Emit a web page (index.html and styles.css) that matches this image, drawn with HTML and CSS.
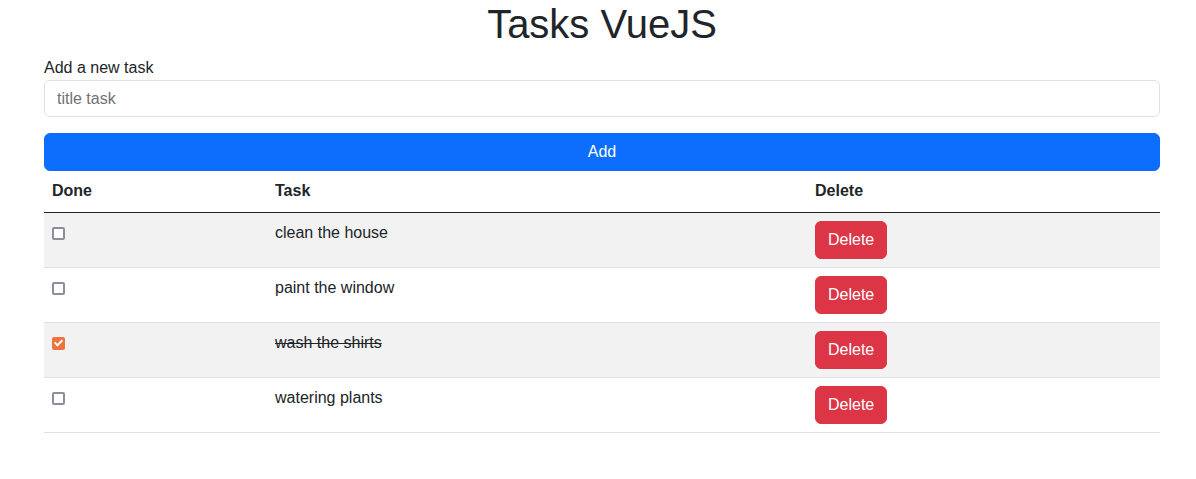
FILE: index.html
```html
<!DOCTYPE html>
<html lang="en">
<head>
<meta charset="utf-8">
<title>Tasks VueJS</title>
<link rel="stylesheet" href="styles.css">
</head>
<body>
<div class="container">
  <h1 class="title">Tasks VueJS</h1>
  <label class="label" for="task">Add a new task</label>
  <input id="task" class="input" type="text" placeholder="title task">
  <button class="btn btn-add">Add</button>
  <table class="table">
    <thead>
      <tr><th class="col-done">Done</th><th class="col-task">Task</th><th>Delete</th></tr>
    </thead>
    <tbody>
      <tr class="odd"><td><input class="check" type="checkbox"></td><td>clean the house</td><td><button class="btn btn-del">Delete</button></td></tr>
      <tr><td><input class="check" type="checkbox"></td><td>paint the window</td><td><button class="btn btn-del">Delete</button></td></tr>
      <tr class="odd"><td><input class="check" type="checkbox" checked></td><td class="done">wash the shirts</td><td><button class="btn btn-del">Delete</button></td></tr>
      <tr><td><input class="check" type="checkbox"></td><td>watering plants</td><td><button class="btn btn-del">Delete</button></td></tr>
    </tbody>
  </table>
</div>
</body>
</html>
```

FILE: styles.css
```css
* { box-sizing: border-box; }
body {
  margin: 0;
  font-family: "Liberation Sans", Arial, sans-serif;
  font-size: 16px;
  line-height: 24px;
  color: #212529;
  background: #fff;
}
.container {
  padding: 0 36px 0 44px;
}
.title {
  margin: 0 0 8px;
  font-size: 40px;
  line-height: 48px;
  font-weight: 400;
  text-align: center;
}
.label {
  display: block;
}
.input {
  display: block;
  width: 100%;
  height: 37px;
  padding: 6px 12px;
  font: inherit;
  color: #212529;
  border: 1px solid #dee2e6;
  border-radius: 6px;
  margin-bottom: 16px;
  outline: none;
}
.input::placeholder { color: #6f7276; }
.btn {
  font: inherit;
  line-height: 24px;
  padding: 6px 12px;
  border: 1px solid transparent;
  border-radius: 6px;
  color: #fff;
  cursor: pointer;
}
.btn-add {
  display: block;
  width: 100%;
  background: #0d6efd;
  border-color: #0d6efd;
}
.btn-del {
  background: #dc3545;
  border-color: #dc3545;
}
.table {
  width: 100%;
  border-collapse: collapse;
}
.table th, .table td {
  padding: 8px;
  text-align: left;
  vertical-align: top;
  border-bottom: 1px solid #dee2e6;
}
.table th {
  font-weight: 700;
  border-bottom: 1px solid #212529;
}
.table th { padding-bottom: 9px; }
.col-done { width: 223px; }
.col-task { width: 540px; }
.odd td { background: #f2f2f2; }
.done { text-decoration: line-through; }
.check {
  appearance: none;
  -webkit-appearance: none;
  display: block;
  position: relative;
  margin: 6px 0 0;
  width: 13px;
  height: 13px;
  border: 2px solid #8f8c9e;
  border-radius: 2px;
  background: #fff;
}
.check:checked {
  background: #ef7341;
  border-color: #ef7341;
}
.check:checked::after {
  content: "";
  position: absolute;
  left: 2px;
  top: -1px;
  width: 3px;
  height: 6px;
  border: solid #fff;
  border-width: 0 2px 2px 0;
  transform: rotate(45deg);
}
```
